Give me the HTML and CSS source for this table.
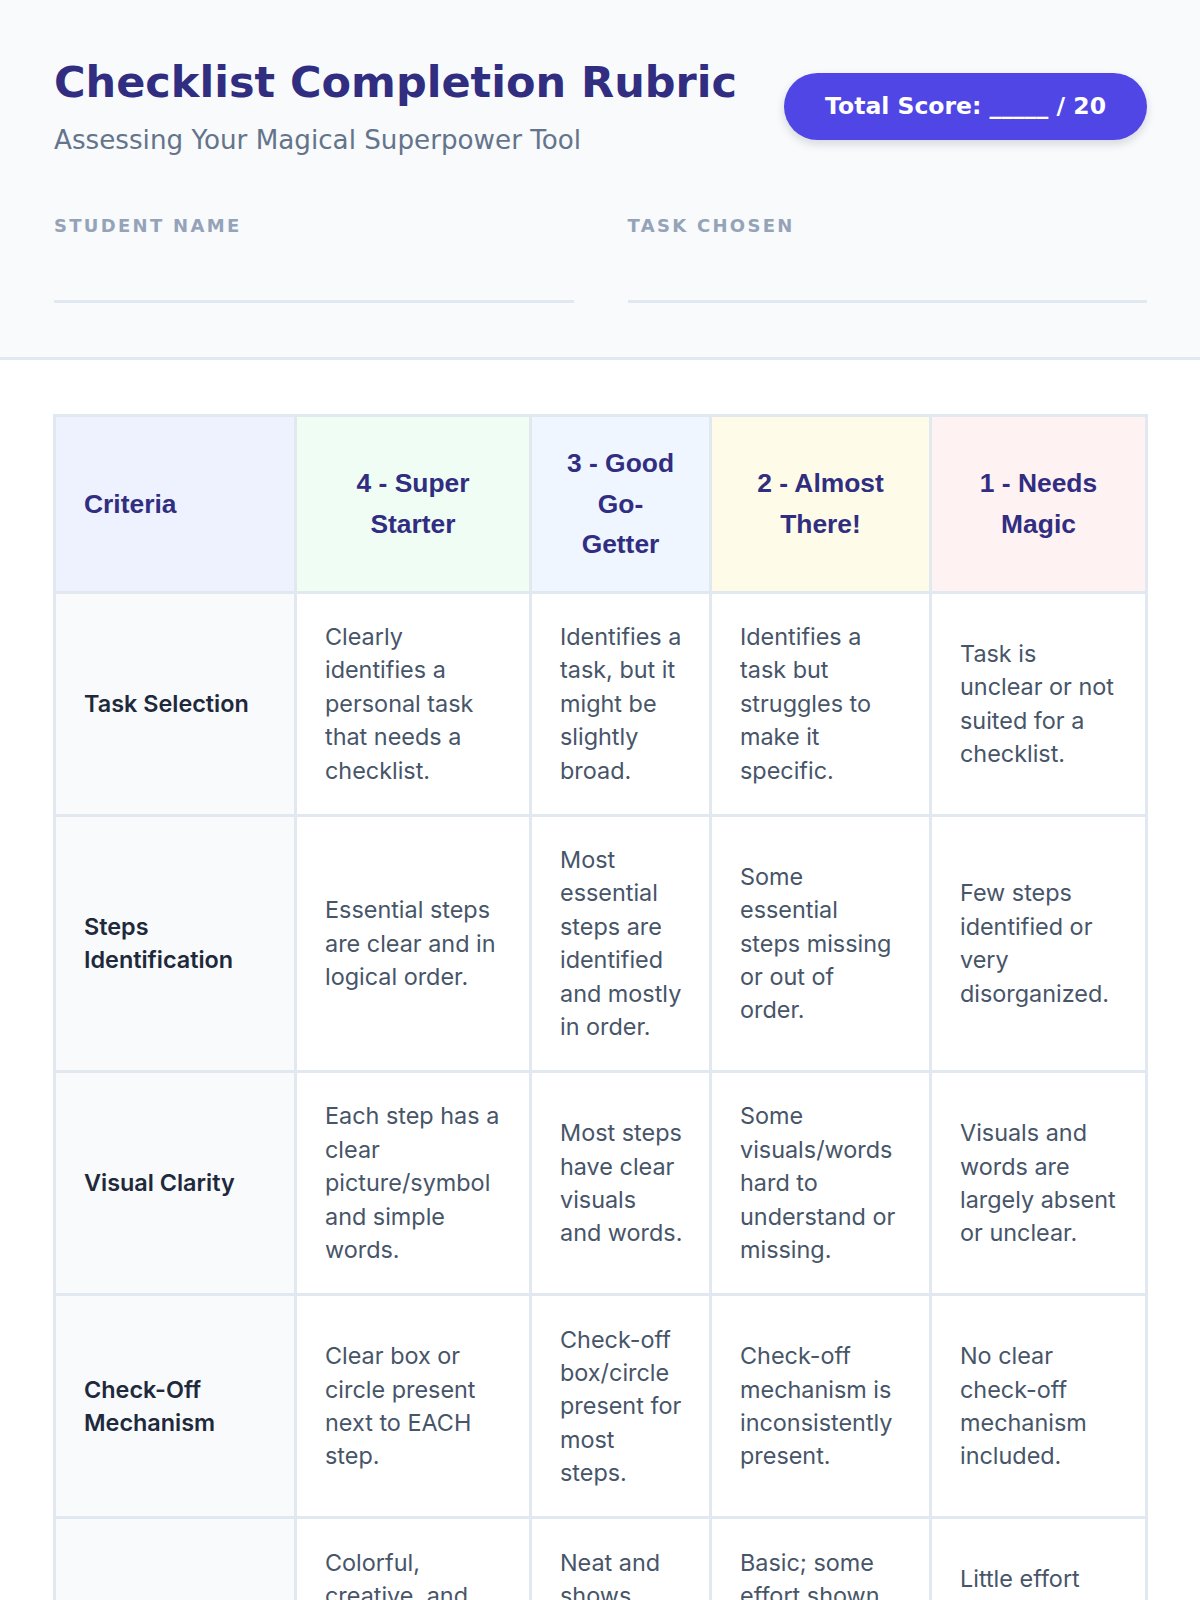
FILE: index.html
```html
<!DOCTYPE html>
<html lang="en">
<head>
<meta charset="utf-8">
<title>Checklist Completion Rubric</title>
<link rel="stylesheet" href="styles.css">
</head>
<body>
<header class="top">
  <div class="top-row">
    <div class="titles">
      <h1 class="title">Checklist Completion Rubric</h1>
      <p class="subtitle">Assessing Your Magical Superpower Tool</p>
    </div>
    <div class="score">Total Score: _____ / 20</div>
  </div>
  <div class="fields">
    <div class="field">
      <div class="field-label">Student Name</div>
      <div class="field-line"></div>
    </div>
    <div class="field">
      <div class="field-label">Task Chosen</div>
      <div class="field-line"></div>
    </div>
  </div>
</header>
<main class="main">
  <table class="rubric">
    <colgroup>
      <col class="c-crit">
      <col class="c-4">
      <col class="c-3">
      <col class="c-2">
      <col class="c-1">
    </colgroup>
    <thead>
      <tr>
        <th class="h-crit">Criteria</th>
        <th class="h-4">4 - Super Starter</th>
        <th class="h-3">3 - Good Go-Getter</th>
        <th class="h-2">2 - Almost There!</th>
        <th class="h-1">1 - Needs Magic</th>
      </tr>
    </thead>
    <tbody>
      <tr>
        <td class="crit">Task Selection</td>
        <td>Clearly identifies a personal task that needs a checklist.</td>
        <td>Identifies a task, but it might be slightly broad.</td>
        <td>Identifies a task but struggles to make it specific.</td>
        <td>Task is unclear or not suited for a checklist.</td>
      </tr>
      <tr>
        <td class="crit">Steps Identification</td>
        <td>Essential steps are clear and in logical order.</td>
        <td>Most essential steps are identified and mostly in order.</td>
        <td>Some essential steps missing or out of order.</td>
        <td>Few steps identified or very disorganized.</td>
      </tr>
      <tr>
        <td class="crit">Visual Clarity</td>
        <td>Each step has a clear picture/symbol and simple words.</td>
        <td>Most steps have clear visuals and words.</td>
        <td>Some visuals/words hard to understand or missing.</td>
        <td>Visuals and words are largely absent or unclear.</td>
      </tr>
      <tr>
        <td class="crit">Check-Off Mechanism</td>
        <td>Clear box or circle present next to EACH step.</td>
        <td>Check-off box/circle present for most steps.</td>
        <td>Check-off mechanism is inconsistently present.</td>
        <td>No clear check-off mechanism included.</td>
      </tr>
      <tr>
        <td class="crit">Presentation</td>
        <td>Colorful, creative, and shows great effort.</td>
        <td>Neat and shows solid effort overall.</td>
        <td>Basic; some effort shown but could be neater.</td>
        <td>Little effort shown; looks rushed.</td>
      </tr>
    </tbody>
  </table>
</main>
</body>
</html>
```

FILE: styles.css
```css
* { box-sizing: border-box; }

body {
  margin: 0;
  background: #ffffff;
  font-family: "DejaVu Sans", "Noto Sans", sans-serif;
  color: #475569;
}

.top {
  background: #f8fafc;
  border-bottom: 3px solid #e2e8f0;
  padding: 57px 53px 54px 54px;
}

.top-row {
  display: flex;
  justify-content: space-between;
  align-items: center;
}

.title {
  margin: 0;
  font-size: 43px;
  font-weight: 700;
  line-height: 51px;
  color: #312e81;
}

.subtitle {
  margin: 17px 0 0;
  font-size: 26.2px;
  line-height: 30px;
  color: #64748b;
}

.score {
  background: #4f46e5;
  color: #ffffff;
  font-weight: 700;
  font-size: 23.5px;
  line-height: 29px;
  padding: 19px 41px;
  border-radius: 999px;
  box-shadow: 0 4px 10px rgba(15, 23, 42, 0.15);
  white-space: nowrap;
}

.fields {
  display: grid;
  grid-template-columns: 1fr 1fr;
  column-gap: 54px;
  margin-top: 60px;
}

.field-label {
  font-weight: 700;
  font-size: 18px;
  line-height: 21px;
  letter-spacing: 2.3px;
  text-transform: uppercase;
  color: #94a3b8;
}

.field-line {
  height: 67px;
  border-bottom: 3px solid #e2e8f0;
}

.main {
  padding: 54px 55px 40px 53px;
}

.rubric {
  width: 100%;
  table-layout: fixed;
  border-collapse: collapse;
  border: 3px solid #e2e8f0;
}

.c-crit { width: 241px; }
.c-4 { width: 235px; }
.c-3 { width: 180px; }
.c-2 { width: 220px; }
.c-1 { width: 216px; }

.rubric th,
.rubric td {
  border: 3px solid #e2e8f0;
  vertical-align: middle;
}

.rubric th {
  padding: 26px 28px;
  font-family: "Liberation Sans", Arial, sans-serif;
  font-weight: 700;
  font-size: 26.4px;
  line-height: 40.5px;
  color: #312e81;
  text-align: center;
}

.rubric th.h-crit { text-align: left; background: #eef2ff; }
.h-4 { background: #f0fdf4; }
.h-3 { background: #eff6ff; }
.h-2 { background: #fefce8; }
.h-1 { background: #fef2f2; }

.rubric td {
  padding: 26.5px 26px 26.5px 28px;
  font-family: "Inter", "Noto Sans", sans-serif;
  font-size: 23.4px;
  line-height: 33.4px;
  color: #475569;
  background: #ffffff;
}

.rubric td.crit {
  background: #f8fafc;
  color: #1e293b;
  font-weight: 600;
}
```
